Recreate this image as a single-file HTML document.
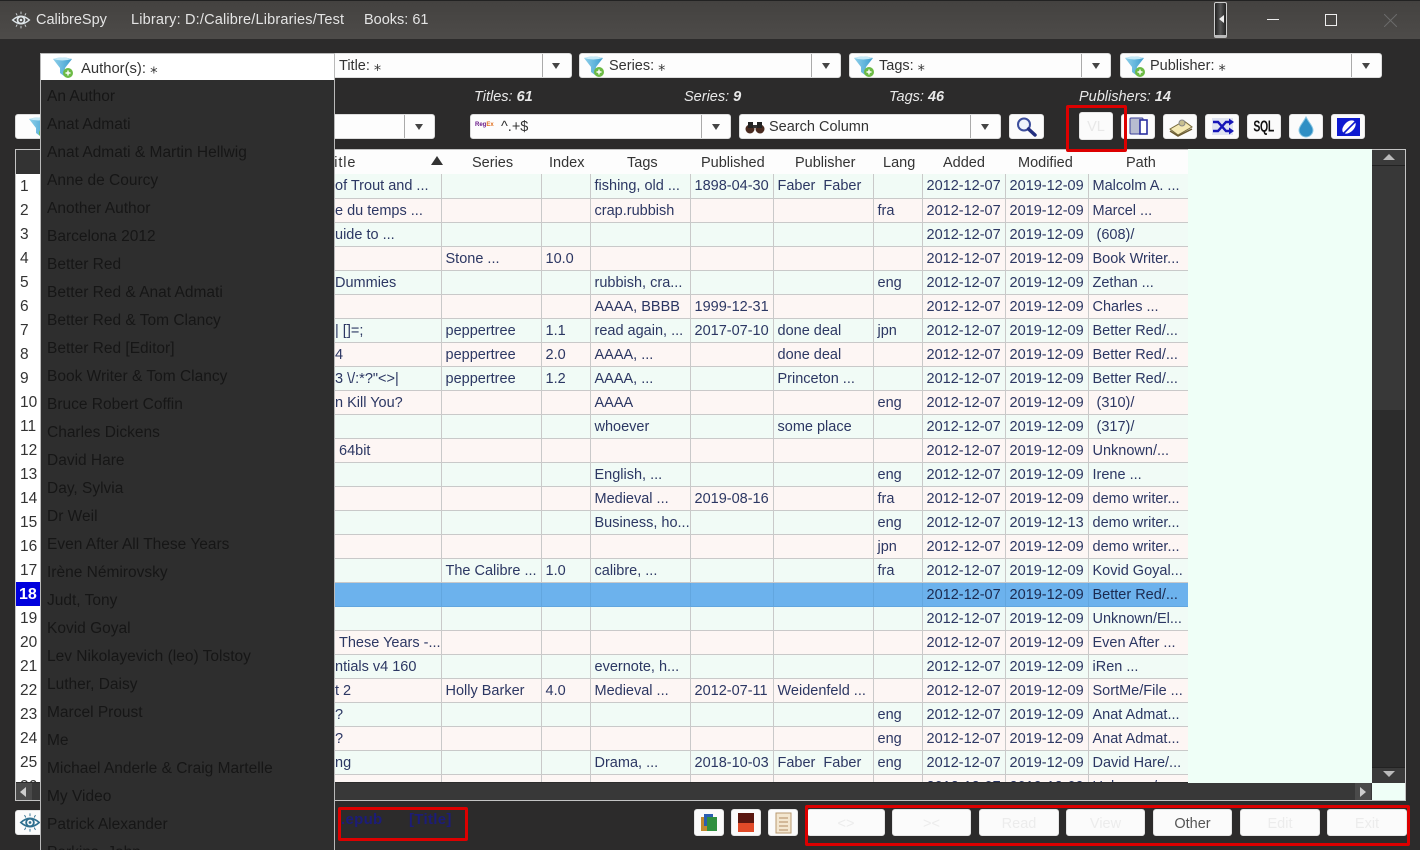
<!DOCTYPE html>
<html><head><meta charset="utf-8"><title>CalibreSpy</title>
<style>
html,body{margin:0;padding:0}
body{width:1420px;height:850px;overflow:hidden;position:relative;background:#2c2b2b;font-family:"Liberation Sans",sans-serif;font-size:14.5px;color:#333}
.a{position:absolute}
.tb{left:0;top:0;width:1420px;height:39px;background:linear-gradient(#444240,#4d4b49);border-top:1px solid #222;box-sizing:border-box}
.tt{color:#e4e4e4;top:12px;white-space:nowrap}
.cb{background:#fdfdfd;border-radius:3px;height:25px;box-sizing:border-box;border:1px solid #ddd;white-space:nowrap}
.cb .t{position:absolute;left:29px;top:4px;color:#333}
.cb .s{position:absolute;top:0;bottom:0;width:1px;background:#aaa}
.cb .ar{position:absolute;top:9px;width:0;height:0;border-left:4px solid transparent;border-right:4px solid transparent;border-top:6px solid #444}
.cb svg{position:absolute;left:1px;top:0}
.lb{top:89px;color:#e8e8e8;font-style:italic;white-space:nowrap}
.btn{background:#fbfbfb;border-radius:3px;box-sizing:border-box;border:1px solid #e6e6e6}
.btn svg{position:absolute;left:0;top:0}
.bb{top:809px;height:27px;text-align:center;line-height:29px;color:#ececec}
.frame{left:15px;top:149px;width:1391px;height:652px;background:#2c2c2c;box-sizing:border-box;border:1px solid #c4c4c4;overflow:hidden}
.green{left:1188px;top:149px;width:184px;height:634px;background:#effff7}
.hd{left:335px;top:150px;width:853px;height:24px;background:#fdfdfd}
.hd span{position:absolute;top:5px;white-space:nowrap;color:#333}
.tw{left:335px;top:174px;width:853px;height:608px;overflow:hidden}
table{border-collapse:collapse;table-layout:fixed;width:853px;color:#2c3763}
td{height:24px;padding:1px 0 0 4px;border-right:1px solid #c9c9c9;border-bottom:1px solid #c9c9c9;white-space:nowrap;overflow:hidden;box-sizing:border-box;line-height:22px;vertical-align:top}
tr{height:24px}
tr:nth-child(odd){background:#f1fbf6}
tr:nth-child(even){background:#fdf6f4}
tr.sel{background:#6cb2ed}
tr.sel td{border-color:#62a6df;color:#1b2a50}
.rn{left:16px;top:174px;width:24px;height:608px;background:#fff;overflow:hidden}
.rn div{height:24px;line-height:26px;text-align:left;color:#333;padding-left:4px;box-sizing:border-box;font-size:15.5px}
.rn .c{background:#0000dd;color:#fff;font-weight:bold;font-size:16px;padding-left:3px}
.pop{left:40px;top:53px;width:295px;height:797px;background:#2e2e2e;border:1px solid #b9b9b9;border-bottom:0;box-sizing:border-box;overflow:hidden}
.pop .top{position:absolute;left:0;top:0;width:293px;height:26px;background:#fff}
.pop .top span{position:absolute;left:40px;top:6px;color:#333;font-size:14.8px}
.pop .it{position:absolute;left:6px;color:#161616;white-space:nowrap;font-size:15.5px;margin-top:1px}
.red{box-sizing:border-box;border:3px solid #dd0000;border-radius:2px}
</style></head><body>
<svg width="0" height="0" style="position:absolute"><defs>
<linearGradient id="fg" x1="0" y1="0" x2="1" y2="0"><stop offset="0" stop-color="#8fd0ea"/><stop offset="1" stop-color="#3f9fd0"/></linearGradient>
<symbol id="f" viewBox="0 0 26 24"><path d="M3 4 Q12 1 22 4 L15 13 L14 21 L10 18 V13Z" fill="url(#fg)"/><path d="M3 4 Q12 7 22 4 Q12 1 3 4Z" fill="#c5e9f6"/><circle cx="18" cy="18" r="5" fill="#6dbb45"/><path d="M18 15.5v5M15.5 18h5" stroke="#fff" stroke-width="1.4"/></symbol>
<symbol id="eye" viewBox="0 0 24 24"><path d="M2 12 Q12 3 22 12 Q12 21 2 12Z" fill="none" stroke="currentColor" stroke-width="1.8"/><circle cx="12" cy="12" r="4.2" fill="none" stroke="currentColor" stroke-width="2"/><circle cx="12" cy="12" r="1.5" fill="currentColor"/><path d="M12 2v3M6 4l1.5 2.5M18 4l-1.5 2.5M12 19v3M6 20l1.5-2.5M18 20l-1.5-2.5" stroke="currentColor" stroke-width="1"/></symbol>
</defs></svg>

<div class="a tb"></div>
<svg class="a" style="left:11px;top:10px;color:#dfe6ea" width="20" height="20"><use href="#eye"/></svg>
<div class="a tt" style="left:36px">CalibreSpy</div>
<div class="a tt" style="left:131px;letter-spacing:.18px">Library: D:/Calibre/Libraries/Test</div>
<div class="a tt" style="left:364px">Books: 61</div>
<div class="a" style="left:1214px;top:2px;width:13px;height:36px;box-sizing:border-box;border:1px solid #ccc;border-bottom:3px solid #bbb;border-radius:2px;background:linear-gradient(90deg,#222,#555,#222)"></div>
<div class="a" style="left:1219px;top:15px;width:0;height:0;border-top:4px solid transparent;border-bottom:4px solid transparent;border-right:5px solid #eee"></div>
<div class="a" style="left:1267px;top:19px;width:12px;height:1px;background:#eee"></div>
<div class="a" style="left:1325px;top:14px;width:12px;height:12px;box-sizing:border-box;border:1px solid #eee"></div>
<svg class="a" style="left:1384px;top:14px" width="13" height="13"><path d="M0 0L13 13M13 0L0 13" stroke="#6b6b6b" stroke-width="1"/></svg>

<div class="a cb" style="left:330px;top:53px;width:242px"><div class="t" style="left:8px">Title: ⁎</div><div class="s" style="left:211px"></div><div class="ar" style="left:221px"></div></div>
<div class="a cb" style="left:579px;top:53px;width:262px"><svg width="26" height="24"><use href="#f"/></svg><div class="t">Series: ⁎</div><div class="s" style="left:231px"></div><div class="ar" style="left:242px"></div></div>
<div class="a cb" style="left:849px;top:53px;width:262px"><svg width="26" height="24"><use href="#f"/></svg><div class="t">Tags: ⁎</div><div class="s" style="left:231px"></div><div class="ar" style="left:242px"></div></div>
<div class="a cb" style="left:1120px;top:53px;width:262px"><svg width="26" height="24"><use href="#f"/></svg><div class="t">Publisher: ⁎</div><div class="s" style="left:230px"></div><div class="ar" style="left:241px"></div></div>

<div class="a lb" style="left:474px">Titles: <b>61</b></div>
<div class="a lb" style="left:684px">Series: <b>9</b></div>
<div class="a lb" style="left:889px">Tags: <b>46</b></div>
<div class="a lb" style="left:1079px">Publishers: <b>14</b></div>

<div class="a cb" style="left:15px;top:114px;width:420px"><svg width="26" height="24" style="left:10px"><use href="#f"/></svg><div class="s" style="left:388px"></div><div class="ar" style="left:399px"></div></div>
<div class="a cb" style="left:470px;top:114px;width:261px"><div class="a" style="left:4px;top:7px;font-size:6px;font-weight:bold;color:#6a1b8a">Reg<span style="color:#e07020">Ex</span></div><div class="t" style="left:30px">^.+$</div><div class="s" style="left:230px"></div><div class="ar" style="left:241px"></div></div>
<div class="a cb" style="left:739px;top:114px;width:262px"><svg width="24" height="22" viewBox="0 0 24 22" style="left:3px;top:1px"><circle cx="7" cy="13" r="4.5" fill="#4a2b20"/><circle cx="17" cy="13" r="4.5" fill="#4a2b20"/><rect x="5" y="6" width="5" height="6" fill="#222"/><rect x="14" y="6" width="5" height="6" fill="#222"/><rect x="10" y="9" width="4" height="3" fill="#333"/></svg><div class="t">Search Column</div><div class="s" style="left:230px"></div><div class="ar" style="left:241px"></div></div>

<div class="a btn" style="left:1009px;top:114px;width:35px;height:25px"><svg width="33" height="23"><circle cx="14" cy="9.5" r="6" fill="#eef3fb" stroke="#3c4e9c" stroke-width="2"/><path d="M18.5 14L25 20" stroke="#232f80" stroke-width="3.5" stroke-linecap="round"/></svg></div>
<div class="a btn" style="left:1079px;top:112px;width:34px;height:28px;text-align:center;line-height:28px;color:#e8e8e8">VL</div>
<div class="a btn" style="left:1121px;top:114px;width:34px;height:25px"><svg width="32" height="23"><rect x="8" y="3" width="13" height="16" rx="1" fill="#b8bcd0" stroke="#3a3f9a" stroke-width="1"/><rect x="18" y="5" width="7" height="14" fill="#fff" stroke="#2a2fa0" stroke-width="1.6"/></svg></div>
<div class="a btn" style="left:1163px;top:114px;width:34px;height:25px"><svg width="32" height="23"><path d="M6 14L20 6L28 12L14 20Z" fill="#f4e9b4" stroke="#776a3a"/><path d="M6 16L14 21L28 14" fill="none" stroke="#6a5a30" stroke-width="1.5"/><circle cx="18" cy="8" r="3" fill="#c8c090" stroke="#888"/></svg></div>
<div class="a btn" style="left:1205px;top:114px;width:34px;height:25px"><svg width="32" height="23"><rect x="6" y="3" width="21" height="17" fill="#dfe3f2"/><path d="M7 7H12L20 16H24M7 16H12L20 7H24" fill="none" stroke="#1616b8" stroke-width="2.4"/><path d="M23 3.5L28 7L23 10.5ZM23 12.5L28 16L23 19.5Z" fill="#1616b8"/></svg></div>
<div class="a btn" style="left:1247px;top:114px;width:34px;height:25px;text-align:center;line-height:23px;font-weight:bold;color:#111;font-size:14px;letter-spacing:-.5px"><span style="display:inline-block;transform:scaleX(.75) scaleY(1.1)">SQL</span></div>
<div class="a btn" style="left:1289px;top:114px;width:34px;height:25px"><svg width="32" height="23"><path d="M16 2C19 8 23 11 23 15A7 7 0 0 1 9 15C9 11 13 8 16 2Z" fill="#2f8fc4" stroke="#8cc8e4"/></svg></div>
<div class="a btn" style="left:1331px;top:114px;width:34px;height:25px"><svg width="32" height="23"><rect x="5" y="3" width="23" height="18" fill="#0e1ad0"/><ellipse cx="17" cy="12" rx="8" ry="5" fill="#fff" transform="rotate(-45 17 12)"/><path d="M10 20L26 4" stroke="#0e1ad0" stroke-width="1.6"/></svg></div>

<div class="a frame"></div>
<div class="a" style="left:16px;top:150px;width:24px;height:24px;background:#333"></div>
<div class="a green"></div>
<div class="a hd">
<span style="left:-10px;letter-spacing:.9px">Title</span>
<span style="left:137px">Series</span><span style="left:214px">Index</span><span style="left:292px">Tags</span><span style="left:366px">Published</span><span style="left:460px">Publisher</span><span style="left:548px">Lang</span><span style="left:608px">Added</span><span style="left:683px">Modified</span><span style="left:791px">Path</span>
<div class="a" style="left:96px;top:6px;width:0;height:0;border-left:6px solid transparent;border-right:6px solid transparent;border-bottom:9px solid #333"></div>
</div>
<div class="a rn"><div>1</div><div>2</div><div>3</div><div>4</div><div>5</div><div>6</div><div>7</div><div>8</div><div>9</div><div>10</div><div>11</div><div>12</div><div>13</div><div>14</div><div>15</div><div>16</div><div>17</div><div class="c">18</div><div>19</div><div>20</div><div>21</div><div>22</div><div>23</div><div>24</div><div>25</div><div>26</div></div>
<div class="a tw"><table>
<colgroup><col style="width:106px"><col style="width:100px"><col style="width:49px"><col style="width:100px"><col style="width:83px"><col style="width:100px"><col style="width:49px"><col style="width:83px"><col style="width:83px"><col style="width:100px"></colgroup>
<tr><td style="padding-left:0">of Trout and ...</td><td></td><td></td><td>fishing, old ...</td><td>1898-04-30</td><td>Faber&nbsp; Faber</td><td></td><td>2012-12-07</td><td>2019-12-09</td><td>Malcolm A. ...</td></tr>
<tr><td style="padding-left:0">e du temps ...</td><td></td><td></td><td>crap.rubbish</td><td></td><td></td><td>fra</td><td>2012-12-07</td><td>2019-12-09</td><td>Marcel ...</td></tr>
<tr><td style="padding-left:0">uide to ...</td><td></td><td></td><td></td><td></td><td></td><td></td><td>2012-12-07</td><td>2019-12-09</td><td>&nbsp;(608)/</td></tr>
<tr><td></td><td>Stone ...</td><td>10.0</td><td></td><td></td><td></td><td></td><td>2012-12-07</td><td>2019-12-09</td><td>Book Writer...</td></tr>
<tr><td style="padding-left:0">Dummies</td><td></td><td></td><td>rubbish, cra...</td><td></td><td></td><td>eng</td><td>2012-12-07</td><td>2019-12-09</td><td>Zethan ...</td></tr>
<tr><td></td><td></td><td></td><td>AAAA, BBBB</td><td>1999-12-31</td><td></td><td></td><td>2012-12-07</td><td>2019-12-09</td><td>Charles ...</td></tr>
<tr><td style="padding-left:0">| []=;</td><td>peppertree</td><td>1.1</td><td>read again, ...</td><td>2017-07-10</td><td>done deal</td><td>jpn</td><td>2012-12-07</td><td>2019-12-09</td><td>Better Red/...</td></tr>
<tr><td style="padding-left:0">4</td><td>peppertree</td><td>2.0</td><td>AAAA, ...</td><td></td><td>done deal</td><td></td><td>2012-12-07</td><td>2019-12-09</td><td>Better Red/...</td></tr>
<tr><td style="padding-left:0">3 \/:*?"&lt;&gt;|</td><td>peppertree</td><td>1.2</td><td>AAAA, ...</td><td></td><td>Princeton ...</td><td></td><td>2012-12-07</td><td>2019-12-09</td><td>Better Red/...</td></tr>
<tr><td style="padding-left:0">n Kill You?</td><td></td><td></td><td>AAAA</td><td></td><td></td><td>eng</td><td>2012-12-07</td><td>2019-12-09</td><td>&nbsp;(310)/</td></tr>
<tr><td></td><td></td><td></td><td>whoever</td><td></td><td>some place</td><td></td><td>2012-12-07</td><td>2019-12-09</td><td>&nbsp;(317)/</td></tr>
<tr><td style="padding-left:4px">64bit</td><td></td><td></td><td></td><td></td><td></td><td></td><td>2012-12-07</td><td>2019-12-09</td><td>Unknown/...</td></tr>
<tr><td></td><td></td><td></td><td>English, ...</td><td></td><td></td><td>eng</td><td>2012-12-07</td><td>2019-12-09</td><td>Irene ...</td></tr>
<tr><td></td><td></td><td></td><td>Medieval ...</td><td>2019-08-16</td><td></td><td>fra</td><td>2012-12-07</td><td>2019-12-09</td><td>demo writer...</td></tr>
<tr><td></td><td></td><td></td><td>Business, ho...</td><td></td><td></td><td>eng</td><td>2012-12-07</td><td>2019-12-13</td><td>demo writer...</td></tr>
<tr><td></td><td></td><td></td><td></td><td></td><td></td><td>jpn</td><td>2012-12-07</td><td>2019-12-09</td><td>demo writer...</td></tr>
<tr><td></td><td>The Calibre ...</td><td>1.0</td><td>calibre, ...</td><td></td><td></td><td>fra</td><td>2012-12-07</td><td>2019-12-09</td><td>Kovid Goyal...</td></tr>
<tr class="sel"><td></td><td></td><td></td><td></td><td></td><td></td><td></td><td>2012-12-07</td><td>2019-12-09</td><td>Better Red/...</td></tr>
<tr><td></td><td></td><td></td><td></td><td></td><td></td><td></td><td>2012-12-07</td><td>2019-12-09</td><td>Unknown/El...</td></tr>
<tr><td style="padding-left:4px">These Years -...</td><td></td><td></td><td></td><td></td><td></td><td></td><td>2012-12-07</td><td>2019-12-09</td><td>Even After ...</td></tr>
<tr><td style="padding-left:0">ntials v4 160</td><td></td><td></td><td>evernote, h...</td><td></td><td></td><td></td><td>2012-12-07</td><td>2019-12-09</td><td>iRen ...</td></tr>
<tr><td style="padding-left:0">t 2</td><td>Holly Barker</td><td>4.0</td><td>Medieval ...</td><td>2012-07-11</td><td>Weidenfeld ...</td><td></td><td>2012-12-07</td><td>2019-12-09</td><td>SortMe/File ...</td></tr>
<tr><td style="padding-left:0">?</td><td></td><td></td><td></td><td></td><td></td><td>eng</td><td>2012-12-07</td><td>2019-12-09</td><td>Anat Admat...</td></tr>
<tr><td style="padding-left:0">?</td><td></td><td></td><td></td><td></td><td></td><td>eng</td><td>2012-12-07</td><td>2019-12-09</td><td>Anat Admat...</td></tr>
<tr><td style="padding-left:0">ng</td><td></td><td></td><td>Drama, ...</td><td>2018-10-03</td><td>Faber&nbsp; Faber</td><td>eng</td><td>2012-12-07</td><td>2019-12-09</td><td>David Hare/...</td></tr>
<tr><td></td><td></td><td></td><td></td><td></td><td></td><td></td><td>2012-12-07</td><td>2019-12-09</td><td>Unknown/...</td></tr>
</table></div>

<!-- vertical scrollbar -->
<div class="a" style="left:1372px;top:150px;width:33px;height:633px;background:#2c2c2c"></div>
<div class="a" style="left:1372px;top:150px;width:33px;height:16px;background:#3a3a3a;border-bottom:1px solid #222;box-sizing:border-box"></div>
<div class="a" style="left:1383px;top:154px;width:0;height:0;border-left:6px solid transparent;border-right:6px solid transparent;border-bottom:6px solid #bbb"></div>
<div class="a" style="left:1372px;top:166px;width:33px;height:244px;background:#383838"></div>
<div class="a" style="left:1372px;top:767px;width:33px;height:16px;background:#3a3a3a;border-top:1px solid #222;box-sizing:border-box"></div>
<div class="a" style="left:1383px;top:771px;width:0;height:0;border-left:6px solid transparent;border-right:6px solid transparent;border-top:6px solid #bbb"></div>
<!-- horizontal scrollbar -->
<div class="a" style="left:16px;top:783px;width:1356px;height:17px;background:#383838"></div>
<div class="a" style="left:16px;top:783px;width:16px;height:17px;background:#4a4a4a"></div>
<div class="a" style="left:20px;top:787px;width:0;height:0;border-top:5px solid transparent;border-bottom:5px solid transparent;border-right:6px solid #ccc"></div>
<div class="a" style="left:1355px;top:783px;width:16px;height:17px;background:#4a4a4a"></div>
<div class="a" style="left:1360px;top:787px;width:0;height:0;border-top:5px solid transparent;border-bottom:5px solid transparent;border-left:6px solid #ccc"></div>
<div class="a" style="left:1372px;top:783px;width:33px;height:17px;background:#effff7"></div>

<!-- bottom -->
<div class="a btn" style="left:15px;top:810px;width:30px;height:25px"><svg width="28" height="23" style="color:#2f6f8f;left:3px;top:0"><use href="#eye" width="22" height="23"/></svg></div>
<div class="a" style="left:341px;top:811px;color:#1c1c78;font-weight:bold;font-size:15px;letter-spacing:.3px">.epub</div>
<div class="a" style="left:409px;top:811px;color:#1c1c78;font-weight:bold;font-size:15px;letter-spacing:.3px">[Title]</div>
<div class="a red" style="left:338px;top:807px;width:130px;height:34px"></div>

<div class="a btn" style="left:694px;top:809px;width:30px;height:27px"><svg width="28" height="25"><rect x="6" y="7" width="8" height="14" fill="#c08a30"/><rect x="9" y="4" width="9" height="12" fill="#2a5fb0"/><rect x="12" y="7" width="10" height="14" fill="#2f8f3f"/></svg></div>
<div class="a btn" style="left:731px;top:809px;width:30px;height:27px"><svg width="28" height="25"><rect x="6" y="3" width="16" height="10" fill="#5a1710"/><rect x="6" y="13" width="16" height="9" fill="#e04a28"/></svg></div>
<div class="a btn" style="left:768px;top:809px;width:30px;height:27px"><svg width="28" height="25"><rect x="7" y="3" width="15" height="20" fill="#f3e6cf" stroke="#b89a70"/><path d="M10 8h9M10 12h9M10 16h9M10 20h9" stroke="#b08a60"/></svg></div>

<div class="a btn bb" style="left:807px;width:78px">&lt;&gt;</div>
<div class="a btn bb" style="left:892px;width:79px">&gt;&lt;</div>
<div class="a btn bb" style="left:979px;width:80px">Read</div>
<div class="a btn bb" style="left:1066px;width:79px">View</div>
<div class="a btn bb" style="left:1153px;width:79px;color:#555">Other</div>
<div class="a btn bb" style="left:1240px;width:80px">Edit</div>
<div class="a btn bb" style="left:1327px;width:80px">Exit</div>
<div class="a red" style="left:805px;top:805px;width:605px;height:41px"></div>
<div class="a red" style="left:1066px;top:105px;width:61px;height:47px"></div>

<!-- popup -->
<div class="a pop">
<div class="top"><svg class="a" style="left:9px;top:1px" width="26" height="24"><use href="#f"/></svg><span>Author(s): ⁎</span></div>
<div class="it" style="top:33px">An Author</div>
<div class="it" style="top:61px">Anat Admati</div>
<div class="it" style="top:89px">Anat Admati &amp; Martin Hellwig</div>
<div class="it" style="top:117px">Anne de Courcy</div>
<div class="it" style="top:145px">Another Author</div>
<div class="it" style="top:173px">Barcelona 2012</div>
<div class="it" style="top:201px">Better Red</div>
<div class="it" style="top:229px">Better Red &amp; Anat Admati</div>
<div class="it" style="top:257px">Better Red &amp; Tom Clancy</div>
<div class="it" style="top:285px">Better Red [Editor]</div>
<div class="it" style="top:313px">Book Writer &amp; Tom Clancy</div>
<div class="it" style="top:341px">Bruce Robert Coffin</div>
<div class="it" style="top:369px">Charles Dickens</div>
<div class="it" style="top:397px">David Hare</div>
<div class="it" style="top:425px">Day, Sylvia</div>
<div class="it" style="top:453px">Dr Weil</div>
<div class="it" style="top:481px">Even After All These Years</div>
<div class="it" style="top:509px">Irène Némirovsky</div>
<div class="it" style="top:537px">Judt, Tony</div>
<div class="it" style="top:565px">Kovid Goyal</div>
<div class="it" style="top:593px">Lev Nikolayevich (leo) Tolstoy</div>
<div class="it" style="top:621px">Luther, Daisy</div>
<div class="it" style="top:649px">Marcel Proust</div>
<div class="it" style="top:677px">Me</div>
<div class="it" style="top:705px">Michael Anderle &amp; Craig Martelle</div>
<div class="it" style="top:733px">My Video</div>
<div class="it" style="top:761px">Patrick Alexander</div>
<div class="it" style="top:789px">Perkins, John</div>
</div>
</body></html>
